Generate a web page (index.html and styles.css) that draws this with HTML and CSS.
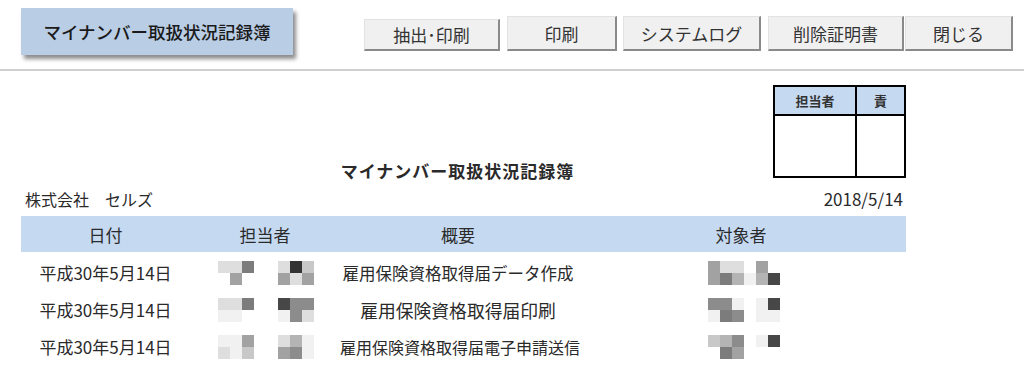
FILE: index.html
```html
<!DOCTYPE html>
<html lang="ja">
<head>
    <meta charset="UTF-8">
    <meta name="viewport" content="width=device-width, initial-scale=1.0">
    <title>マイナンバー取扱状況記録簿</title>
    <link rel="stylesheet" href="styles.css">
</head>
<body>
    <header class="toolbar">
        <div class="title-btn">マイナンバー取扱状況記録簿</div>
        <button class="btn btn-extract">抽出･印刷</button>
        <button class="btn btn-print">印刷</button>
        <button class="btn btn-log">システムログ</button>
        <button class="btn btn-cert">削除証明書</button>
        <button class="btn btn-close">閉じる</button>
    </header>

    <main class="report">
        <div class="report-head">
            <h2 class="report-title">マイナンバー取扱状況記録簿</h2>
            <div class="stamp">
                <div class="stamp-label">担当者</div>
                <div class="stamp-label last">責</div>
                <div class="stamp-cell"></div>
                <div class="stamp-cell last"></div>
            </div>
        </div>

        <div class="report-meta">
            <span class="company">株式会社　セルズ</span>
            <span class="date">2018/5/14</span>
        </div>

        <div class="table-head">
            <div>日付</div>
            <div>担当者</div>
            <div>概要</div>
            <div>対象者</div>
        </div>

        <div class="table-body">
            <!-- 1行目 -->
            <div class="row">
                <div class="cell-date">平成30年5月14日</div>
                <div class="cell-staff">
                    <div class="mosaic m3">
                        <span class="s2"></span><span class="s2"></span><span class="s7"></span>
                        <span class="w"></span><span class="s5"></span><span class="w"></span>
                    </div>
                    <div class="mosaic m3">
                        <span class="s2"></span><span class="s9"></span><span class="s3"></span>
                        <span class="s5"></span><span class="s2"></span><span class="s5"></span>
                    </div>
                </div>
                <div class="cell-desc">雇用保険資格取得届データ作成</div>
                <div class="cell-target">
                    <div class="mosaic m6">
                        <span class="s5"></span><span class="s2"></span><span class="s2"></span><span class="w"></span><span class="s5"></span><span class="w"></span>
                        <span class="s5"></span><span class="s7"></span><span class="s4"></span><span class="s1"></span><span class="s4"></span><span class="s8"></span>
                    </div>
                </div>
            </div>
            <!-- 2行目 -->
            <div class="row">
                <div class="cell-date">平成30年5月14日</div>
                <div class="cell-staff">
                    <div class="mosaic m3">
                        <span class="s2"></span><span class="s2"></span><span class="s7"></span>
                        <span class="s1"></span><span class="s1"></span><span class="w"></span>
                    </div>
                    <div class="mosaic m3">
                        <span class="s8"></span><span class="s6"></span><span class="s6"></span>
                        <span class="s1"></span><span class="s6"></span><span class="s2"></span>
                    </div>
                </div>
                <div class="cell-desc wide">雇用保険資格取得届印刷</div>
                <div class="cell-target">
                    <div class="mosaic m6">
                        <span class="s6"></span><span class="s6"></span><span class="s1"></span><span class="w"></span><span class="s1"></span><span class="s8"></span>
                        <span class="s1"></span><span class="s7"></span><span class="s6"></span><span class="w"></span><span class="s1"></span><span class="s1"></span>
                    </div>
                </div>
            </div>
            <!-- 3行目 -->
            <div class="row">
                <div class="cell-date">平成30年5月14日</div>
                <div class="cell-staff">
                    <div class="mosaic m3">
                        <span class="s1"></span><span class="s1"></span><span class="s5"></span>
                        <span class="s2"></span><span class="s1"></span><span class="s3"></span>
                    </div>
                    <div class="mosaic m3">
                        <span class="s2"></span><span class="s4"></span><span class="s1"></span>
                        <span class="s5"></span><span class="s6"></span><span class="s1"></span>
                    </div>
                </div>
                <div class="cell-desc narrow">雇用保険資格取得届電子申請送信</div>
                <div class="cell-target">
                    <div class="mosaic m6">
                        <span class="s3"></span><span class="s4"></span><span class="s6"></span><span class="w"></span><span class="s1"></span><span class="s8"></span>
                        <span class="w"></span><span class="s7"></span><span class="s5"></span><span class="w"></span><span class="w"></span><span class="w"></span>
                    </div>
                </div>
            </div>
        </div>
    </main>
</body>
</html>
```

FILE: styles.css
```css
body {
    margin: 0;
    padding: 0;
    background-color: #ffffff;
    color: #2a2a2a;
    font-family: "Noto Sans CJK JP", "Noto Sans", sans-serif;
}

/* ツールバー */
.toolbar {
    display: flex;
    align-items: flex-start;
    height: 69px;
    border-bottom: 2px solid #d0d0d0;
}

.title-btn {
    margin: 8px 0 0 21px;
    width: 272px;
    height: 47px;
    display: flex;
    align-items: center;
    justify-content: center;
    background-color: #b9cde5;
    box-shadow: 3px 4px 4px rgba(0, 0, 0, 0.45);
    font-size: 17.5px;
    font-weight: 500;
    color: #1a1a1a;
}

.btn {
    margin-top: 16px;
    height: 35px;
    padding: 0;
    background-color: #f0f0f0;
    border: 1px solid #e2e2e2;
    border-right: 2px solid #8a8a8a;
    border-bottom: 2px solid #8a8a8a;
    font-family: inherit;
    font-size: 17px;
    color: #333;
    cursor: pointer;
}

.btn-extract {
    margin-left: 71px;
    margin-top: 19px;
    height: 32px;
    width: 136px;
}

.btn-print {
    margin-left: 7px;
    width: 110px;
}

.btn-log {
    margin-left: 6px;
    width: 138px;
}

.btn-cert {
    margin-left: 7px;
    width: 136px;
}

.btn-close {
    margin-left: 1px;
    width: 108px;
}

/* 帳票 */
.report {
    width: 885px;
    margin-left: 21px;
}

.report-head {
    display: grid;
    grid-template-columns: 1fr auto 1fr;
    margin-top: 14px;
}

.report-title {
    grid-column: 2;
    align-self: end;
    margin: 0 12px -5px 0;
    font-size: 17px;
    font-weight: 700;
    line-height: 24px;
    letter-spacing: 1px;
}

.stamp {
    grid-column: 3;
    justify-self: end;
    display: grid;
    grid-template-columns: 82px 47px;
    grid-template-rows: 29px 60px;
    border: 2px solid #000;
}

.stamp-label {
    display: flex;
    align-items: center;
    justify-content: center;
    background-color: #c5d9f1;
    border-right: 2px solid #000;
    border-bottom: 2px solid #000;
    font-size: 13px;
    font-weight: 700;
    color: #333;
}

.stamp-cell {
    border-right: 2px solid #000;
}

.stamp-label.last,
.stamp-cell.last {
    border-right: none;
}

.report-meta {
    display: flex;
    justify-content: space-between;
    margin-top: 9px;
    font-size: 16px;
    line-height: 24px;
}

.company {
    padding-left: 4px;
}

.date {
    padding-right: 3px;
    font-size: 17px;
}

.table-head,
.row {
    display: grid;
    grid-template-columns: 169px 150px 236px 330px;
    align-items: center;
    text-align: center;
}

.table-head {
    margin-top: 5px;
    height: 36px;
    background-color: #c5d9f1;
    font-size: 17px;
}

.table-body {
    padding-top: 2px;
}

.row {
    height: 37px;
}

.cell-date {
    font-size: 17px;
}

.cell-desc {
    font-size: 16.5px;
    white-space: nowrap;
}

.cell-desc.wide {
    font-size: 17.8px;
}

.cell-desc.narrow {
    font-size: 16px;
}

.cell-staff {
    display: flex;
    justify-content: center;
    gap: 24px;
    padding-left: 2px;
}

.cell-target {
    display: flex;
    justify-content: center;
    padding-left: 6px;
}

/* モザイク */
.mosaic {
    display: grid;
    grid-auto-rows: 12px;
}

.mosaic.m3 {
    grid-template-columns: repeat(3, 12px);
}

.mosaic.m6 {
    grid-template-columns: repeat(6, 12px);
}

.w { background-color: #ffffff; }
.s1 { background-color: #f1f1f1; }
.s2 { background-color: #dedede; }
.s3 { background-color: #c8c8c8; }
.s4 { background-color: #b4b4b4; }
.s5 { background-color: #a2a2a2; }
.s6 { background-color: #8c8c8c; }
.s7 { background-color: #7c7c7c; }
.s8 { background-color: #474747; }
.s9 { background-color: #333333; }
```
